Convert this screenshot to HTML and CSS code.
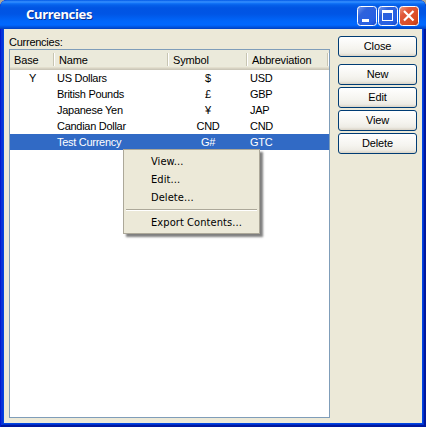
FILE: index.html
```html
<!DOCTYPE html>
<html lang="en">
<head>
<meta charset="utf-8">
<title>Currencies</title>
<link rel="stylesheet" href="styles.css">
</head>
<body>
<div class="window">
  <header class="titlebar">
    <h1>Currencies</h1>
    <div class="controls">
      <svg class="ctl" viewBox="0 0 20 20"><use href="#blue"/><path d="M5 13h7v3H5z" fill="#fff"/></svg>
      <svg class="ctl" viewBox="0 0 20 20"><use href="#blue"/><path d="M4 4h11v11H4zM5 7v7h9V7z" fill="#fff" fill-rule="evenodd"/></svg>
      <svg class="ctl" viewBox="0 0 20 20"><rect x=".5" y=".5" width="19" height="19" rx="3" fill="url(#r)" stroke="#fff"/><path d="M5 5l9.500 9.500M14.500 5L5 14.500" stroke="#fff" stroke-width="2.200"/></svg>
    </div>
  </header>
  <main class="client">
    <section class="listing">
      <div class="label">Currencies:</div>
      <div class="list">
        <div class="head"><span>Base</span><span>Name</span><span>Symbol</span><span>Abbreviation</span></div>
        <div class="row"><span class="mid">Y</span><span>US Dollars</span><span class="mid">$</span><span>USD</span></div>
        <div class="row"><span></span><span>British Pounds</span><span class="mid">£</span><span>GBP</span></div>
        <div class="row"><span></span><span>Japanese Yen</span><span class="mid">¥</span><span>JAP</span></div>
        <div class="row"><span></span><span>Candian Dollar</span><span class="mid">CND</span><span>CND</span></div>
        <div class="row selected"><span></span><span>Test Currency</span><span class="mid">G#</span><span>GTC</span></div>
      </div>
    </section>
    <nav class="actions">
      <button class="close">Close</button>
      <button>New</button>
      <button>Edit</button>
      <button>View</button>
      <button>Delete</button>
    </nav>
  </main>
  <div class="menu">
    <div>View...</div>
    <div>Edit...</div>
    <div>Delete...</div>
    <hr>
    <div class="export">Export Contents...</div>
  </div>
</div>
<svg class="defs" width="0" height="0">
  <defs>
    <linearGradient id="b" x1="0" y1="0" x2="1" y2="1"><stop offset="0" stop-color="#7a9cf0"/><stop offset=".3" stop-color="#2f62dc"/><stop offset=".75" stop-color="#2860e4"/><stop offset="1" stop-color="#1446c8"/></linearGradient>
    <linearGradient id="r" x1="0" y1="0" x2="1" y2="1"><stop offset="0" stop-color="#f0a088"/><stop offset=".3" stop-color="#e0583a"/><stop offset=".75" stop-color="#da4c22"/><stop offset="1" stop-color="#b83410"/></linearGradient>
    <g id="blue"><rect x=".5" y=".5" width="19" height="19" rx="3" fill="url(#b)" stroke="#fff"/></g>
  </defs>
</svg>
</body>
</html>
```
FILE: styles.css
```css
* { box-sizing: border-box; }
body {
  margin: 0;
  background: #aca899;
  font: 11px/16px "Liberation Sans", Arial, sans-serif;
  letter-spacing: -.15px;
  color: #000;
  overflow: hidden;
}
.defs { position: absolute; }
.window {
  position: relative;
  width: 426px;
  height: 427px;
  padding: 0 4px 4px;
  border-radius: 7px 7px 0 0;
  background: #0046e0;
  box-shadow: inset 1px 0 #0019cf, inset -2px -2px #00189c, inset 3px 0 #0831d9, inset -3px -3px #0030cf;
  overflow: hidden;
}
.titlebar {
  display: flex;
  justify-content: space-between;
  height: 29px;
  margin: 0 -4px;
  padding: 6px 7px 0 26px;
  background: linear-gradient(#0058e6 0, #3a93ff 2px, #1477fa 3px, #0560ea 5px, #0054e3 8px, #0055e5 14px, #0066fa 21px, #0068ff 25px, #0054e0 27px, #0040c0 29px);
}
h1 {
  margin: 0;
  font: bold 13px/17px "Noto Sans", sans-serif;
  letter-spacing: -.3px;
  color: #fff;
  text-shadow: 1px 1px #0a3193;
}
.controls { display: flex; gap: 1px; }
.ctl { width: 20px; height: 20px; }
.client {
  display: flex;
  gap: 8px;
  height: 394px;
  padding: 5px 0 0 5px;
  background: #ece9d8;
}
.listing { width: 321px; }
.label { height: 15px; letter-spacing: -.25px; }
.list { height: 369px; border: 1px solid #7f9db9; background: #fff; }
.head, .row { display: grid; white-space: nowrap; }
.head {
  grid-template-columns: 44px 114px 79px 81px;
  height: 20px;
  padding-top: 3px;
  background: linear-gradient(#ebeadb 0 17px, #e2decd 17px 18px, #d6d2c2 18px 19px, #cbc7b8 19px);
}
.head span {
  height: 13px;
  padding-left: 5px;
  line-height: 14px;
  border-right: 1px solid #c7c5b2;
  box-shadow: 1px 0 #fff;
}
.head span:first-child { padding-left: 4px; }
.row {
  grid-template-columns: 44px 114px 79px 81px;
  height: 16px;
  letter-spacing: -.28px;
}
.row span { padding-left: 3px; }
.row .mid { padding-left: 1px; text-align: center; }
.row.selected { background: #316ac5; color: #fff; }
.actions { display: flex; flex-direction: column; gap: 2px; width: 79px; padding-top: 2px; }
button {
  height: 21px;
  padding: 0 0 1px;
  border: 1px solid #003c74;
  border-radius: 3px;
  background: linear-gradient(#fff, #f5f4ef 60%, #eeece5 85%, #d9d3c6);
  font: inherit;
  letter-spacing: -.1px;
  line-height: 17px;
  color: #000;
}
.close { margin-bottom: 5px; }
.menu {
  position: absolute;
  left: 123px;
  top: 149px;
  width: 137px;
  height: 85px;
  padding: 2px;
  border: 1px solid #aca899;
  background: #ece9d8;
  box-shadow: 3px 3px 2px rgba(0, 0, 0, .5);
  font: 11px/20px "DejaVu Sans Condensed", "DejaVu Sans", sans-serif;
  letter-spacing: .08px;
}
.menu div { height: 18px; padding-left: 25px; white-space: nowrap; }
.menu hr { height: 2px; margin: 3px 0 2px; border: 0; border-top: 1px solid #aca899; background: #fff; }
```
